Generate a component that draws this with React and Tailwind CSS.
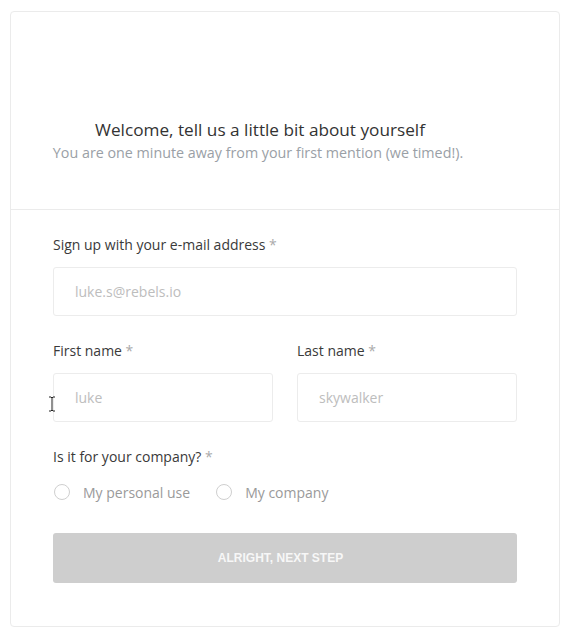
import React from "react";

function Radio({ label }) {
  return (
    <label className="flex items-center gap-[13px] h-[20px]">
      <span className="w-[16px] h-[16px] rounded-full border border-[#cfcfcf] bg-white" />
      <span className="text-[14px] text-[#9a9a9a]">{label}</span>
    </label>
  );
}

function Field({ label, placeholder, className = "" }) {
  return (
    <div className={"flex flex-col " + className}>
      <div className="text-[14px] leading-[20px] text-[#3a3a3a]">
        {label} <span className="text-[#aaa]">*</span>
      </div>
      <div className="mt-[12px] h-[49px] rounded-[3px] border border-[#ececec] flex items-center pl-[21px] text-[14px] text-[#bdbdbd]">
        {placeholder}
      </div>
    </div>
  );
}

export default function App() {
  return (
    <div className="bg-white min-h-[635px] pt-[11px] pl-[10px]" style={{ fontFamily: '"Open Sans", sans-serif' }}>
      <div className="w-[550px] h-[616px] border border-[#ebebeb] rounded-[4px] flex flex-col relative">
        <div className="h-[198px] border-b border-[#ebebeb] flex flex-col items-center pt-[106px] pr-[54px]">
          <div className="text-[17.2px] leading-[24px] text-[#333] pl-[4px]">Welcome, tell us a little bit about yourself</div>
          <div className="text-[14.3px] leading-[22px] text-[#9aa0a6]">You are one minute away from your first mention (we timed!).</div>
        </div>
        <div className="pl-[42px] pr-[42px] pt-[25px] flex flex-col">
          <Field label="Sign up with your e-mail address" placeholder="luke.s@rebels.io" />
          <div className="mt-[25px] grid grid-cols-2 gap-[24px]">
            <Field label="First name" placeholder="luke" />
            <Field label="Last name" placeholder="skywalker" />
          </div>
          <div className="mt-[25px] text-[14px] leading-[20px] text-[#3a3a3a]">
            Is it for your company? <span className="text-[#aaa]">*</span>
          </div>
          <div className="mt-[15px] flex items-center gap-[26px] pl-[1px]">
            <Radio label="My personal use" />
            <Radio label="My company" />
          </div>
          <button
            className="mt-[31px] h-[50px] w-full rounded-[3px] bg-[#cecece] text-[12px] font-bold text-[#f7f7f7] uppercase pr-[9px]"
            style={{ fontFamily: '"Liberation Sans", Arial, sans-serif' }}
          >
            Alright, next step
          </button>
        </div>
        <svg className="absolute left-[37px] top-[384px]" width="8" height="16" viewBox="0 0 8 16">
          <path d="M1 1h2l1 1 1-1h2M4 2v12M1 15h2l1-1 1 1h2" stroke="#222" strokeWidth="1" fill="none" />
        </svg>
      </div>
    </div>
  );
}
